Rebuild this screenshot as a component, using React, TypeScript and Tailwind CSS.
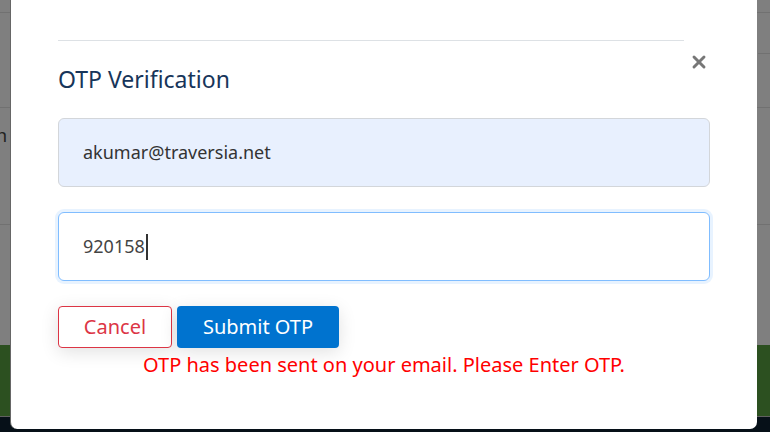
import { X } from "lucide-react";

export default function App() {
  return (
    <div
      className="relative w-[770px] h-[432px] overflow-hidden bg-[#7f7f7f] flex flex-col"
      style={{ fontFamily: '"Noto Sans", "Open Sans", sans-serif' }}
    >
      {/* Dimmed page behind the modal */}
      <div className="flex-1 flex flex-col">
        <div className="h-[13px] border-b border-[#717171]" />
        <div className="h-[95px] border-b border-[#717171] flex items-end justify-end">
          <div className="w-[12px] h-[54px] border-t border-[#717171]" />
        </div>
        <div className="h-[117px] border-b border-[#717171] pt-[14px] pl-px text-[18px] text-[#222] leading-[26px]">
          <span className="-ml-[5px]">n</span>
        </div>
      </div>
      <div className="h-[72px] bg-[#2c5020] border-b border-[#606060]" />
      <div className="h-[15px] bg-[#061018]" />

      {/* Modal */}
      <div className="absolute left-[10px] right-[13px] top-[-10px] bottom-[3px] bg-white rounded-b-[7px] border-l border-[#666] pl-[47px] pr-[47px] pt-[50px]">
        <div className="flex">
          <div className="w-[628px]">
            <div className="h-px bg-[#dde1e5]" />
            <h2 className="mt-[23px] text-[23px] leading-[30px] text-[#17355a]">OTP Verification</h2>
          </div>
          <button className="ml-[4px] mt-[11px] h-[22px] w-[22px] flex items-center justify-center text-[#777]">
            <X size={20} strokeWidth={3.5} />
          </button>
        </div>

        <div className="mt-[24px] h-[69px] rounded-[6px] border border-[#d3d6da] bg-[#e8f0fe] px-[24px] flex items-center text-[18px] text-[#333]">
          akumar@traversia.net
        </div>

        <div className="mt-[25px] h-[69px] rounded-[6px] border border-[#80bdff] bg-white px-[24px] flex items-center text-[18px] text-[#444] shadow-[0_0_0_3px_rgba(128,189,255,0.18)]">
          920158
          <span className="ml-px h-[26px] w-[2px] bg-[#333]" />
        </div>

        <div className="mt-[25px] flex gap-[5px]">
          <button className="h-[42px] w-[114px] rounded-[4px] border border-[#dc3545] bg-white text-[20px] text-[#dc3545] shadow-[0_4px_18px_rgba(0,0,0,0.12)]">
            Cancel
          </button>
          <button className="h-[42px] w-[162px] rounded-[4px] bg-[#0073cf] text-[20px] text-white shadow-[0_4px_18px_rgba(0,0,0,0.12)]">
            Submit OTP
          </button>
        </div>

        <p className="mt-[3px] text-center text-[20px] leading-[28px] text-[#ff0000]">
          OTP has been sent on your email. Please Enter OTP.
        </p>
      </div>
    </div>
  );
}
